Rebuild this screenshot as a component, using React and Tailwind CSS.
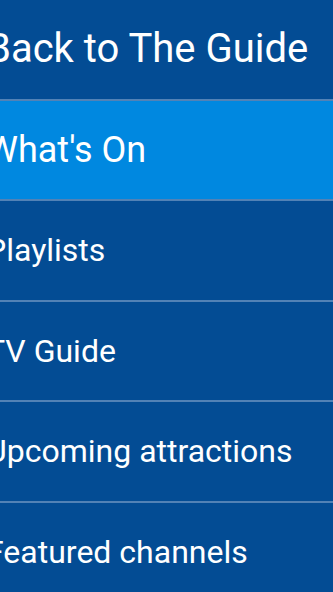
const items = [
  { label: "What's On", active: true },
  { label: 'Playlists' },
  { label: 'TV Guide' },
  { label: 'Upcoming attractions' },
  { label: 'Featured channels' },
]

export default function App() {
  return (
    <div className="w-[333px] h-[592px] overflow-hidden bg-[#034c94] font-['Roboto',sans-serif] text-white">
      <div className="h-[100.5px] flex items-center border-b-2 border-[#5282b6]">
        <span className="-ml-[14px] text-[40px] leading-none whitespace-nowrap">Back to The Guide</span>
      </div>
      {items.map((item) => (
        <div
          key={item.label}
          className={`h-[100.5px] flex items-center border-b-2 border-[#5282b6] ${item.active ? 'bg-[#0088e0]' : ''}`}
        >
          <span
            className={`-ml-[14px] leading-none whitespace-nowrap ${item.active ? 'text-[36px]' : 'text-[32px]'}`}
          >
            {item.label}
          </span>
        </div>
      ))}
    </div>
  )
}
